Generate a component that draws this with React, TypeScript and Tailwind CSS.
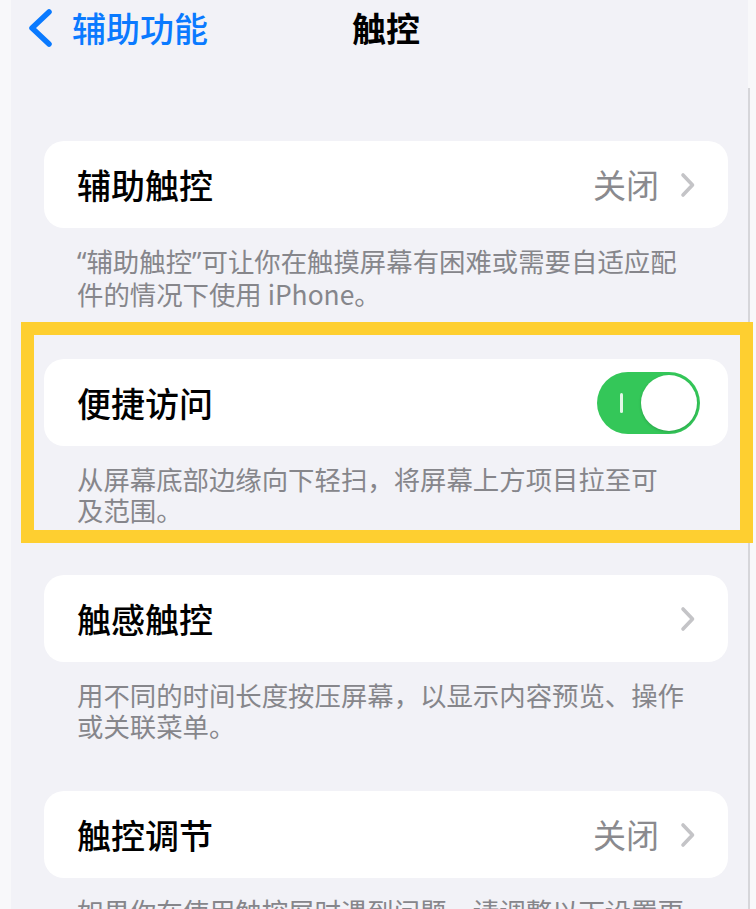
import React from 'react';

type Row = {
  key: string;
  title: string;
  value?: string;
  kind: 'link' | 'toggle';
  lines: React.ReactNode[];
};

// Latin-style curly quotes are narrower than the CJK full-width ones
const Q = ({ children }: { children: string }) => (
  <span className="font-['Noto_Sans','Liberation_Sans',sans-serif]">{children}</span>
);

const rows: Row[] = [
  {
    key: 'assistive',
    title: '辅助触控',
    value: '关闭',
    kind: 'link',
    lines: [
      <>
        <Q>“</Q>辅助触控<Q>”</Q>可让你在触摸屏幕有困难或需要自适应配
      </>,
      '件的情况下使用 iPhone。',
    ],
  },
  {
    key: 'reach',
    title: '便捷访问',
    kind: 'toggle',
    lines: ['从屏幕底部边缘向下轻扫，将屏幕上方项目拉至可', '及范围。'],
  },
  {
    key: 'haptic',
    title: '触感触控',
    kind: 'link',
    lines: ['用不同的时间长度按压屏幕，以显示内容预览、操作', '或关联菜单。'],
  },
  {
    key: 'accommodations',
    title: '触控调节',
    value: '关闭',
    kind: 'link',
    lines: ['如果你在使用触控屏时遇到问题，请调整以下设置更', '改屏幕对触摸的反应方式。'],
  },
];

const BackChevron = () => (
  <svg width="26" height="38" viewBox="0 0 26 38" fill="none">
    <path d="M22 3 L5 19 L22 35" stroke="#0a7aff" strokeWidth="5.5" strokeLinecap="round" strokeLinejoin="round" />
  </svg>
);

const RowChevron = () => (
  <svg width="16" height="26" viewBox="0 0 16 26" fill="none">
    <path d="M3 3 L12.5 13 L3 23" stroke="#c4c4c7" strokeWidth="3.6" strokeLinecap="round" strokeLinejoin="round" />
  </svg>
);

const Toggle = () => (
  <div className="relative w-[103px] h-[62px] rounded-full bg-[#34c759] flex items-center justify-end p-[3px] -mr-[2px]">
    <span className="absolute left-[23px] top-[21px] w-[2.5px] h-[20px] rounded-full bg-white/85" />
    <span className="w-[56px] h-[56px] rounded-full bg-white shadow-[0_1px_3px_rgba(0,0,0,0.18)]" />
  </div>
);

const App: React.FC = () => {
  return (
    <div className="relative w-[756px] h-[909px] overflow-hidden flex bg-[#f8f8fa] font-['Noto_Sans_CJK_SC','Noto_Sans',sans-serif]">
      <div className="w-[11px] shrink-0" />

      <main className="w-[737px] shrink-0 bg-[#f2f2f7] flex flex-col">
        <header className="h-[56px] shrink-0 flex items-center pl-[16px]">
          <BackChevron />
          <span className="ml-[19px] text-[34px] leading-none font-medium text-[#0a7aff]">辅助功能</span>
          <span className="ml-[144px] text-[34px] leading-none font-semibold text-black">触控</span>
        </header>

        <div className="mt-[85px] shrink-0 flex flex-col gap-[50px] pl-[33px] pr-[20px]">
          {rows.map((row) => (
            <section key={row.key} className="shrink-0">
              <div
                className={`h-[87px] rounded-[20px] bg-white flex items-center pl-[33px] ${
                  row.kind === 'toggle' ? 'pr-[30px]' : 'pr-[32px]'
                }`}
              >
                <span className="text-[34px] leading-none font-medium text-black">{row.title}</span>
                <div className="ml-auto flex items-center">
                  {row.value && (
                    <span className="mr-[21px] text-[33px] leading-none text-[#8a8a8e]">{row.value}</span>
                  )}
                  {row.kind === 'toggle' ? <Toggle /> : <RowChevron />}
                </div>
              </div>
              <p className="mt-[17px] pl-[33px] text-[26.4px] leading-[31px] text-[#86868b] whitespace-nowrap">
                {row.lines[0]}
                <br />
                {row.lines[1]}
              </p>
            </section>
          ))}
        </div>
      </main>

      <div className="mt-[88px] w-[2px] shrink-0 bg-[#d6d6da]" />

      {/* highlight frame drawn over the second group */}
      <div className="absolute left-[21px] top-[322px] w-[732px] h-[221px] border-[13px] border-[#fecf30] pointer-events-none" />
    </div>
  );
};

export default App;
